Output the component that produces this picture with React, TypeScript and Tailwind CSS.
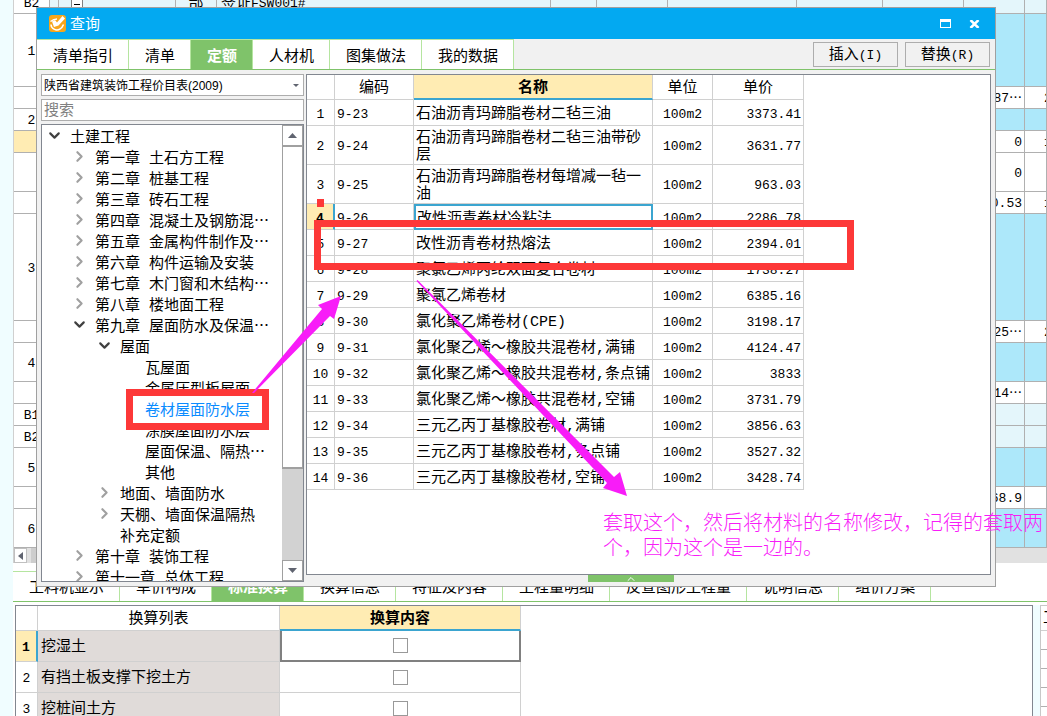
import { ChevronDown, ChevronRight, ChevronUp } from "lucide-react";

type GridRow = { no: string; height: string; fill: string; mark?: boolean; qty?: string; next?: string };

const gridRows: GridRow[] = [
  { no: "1", height: "h-[73px]", fill: "bg-[#ade8fa]" },
  { no: "", height: "h-[22px]", fill: "bg-white", qty: "87⋯", next: "2" },
  { no: "2", height: "h-[22px]", fill: "bg-[#ade8fa]" },
  { no: "", height: "h-[22px]", fill: "bg-white", mark: true, qty: "0", next: "1" },
  { no: "", height: "h-[39px]", fill: "bg-white", qty: "0" },
  { no: "", height: "h-[22px]", fill: "bg-white", qty: "0.53", next: "1" },
  { no: "3", height: "h-[107px]", fill: "bg-[#ade8fa]" },
  { no: "", height: "h-[22px]", fill: "bg-white", qty: "25⋯", next: "2" },
  { no: "4", height: "h-[39px]", fill: "bg-[#ade8fa]" },
  { no: "", height: "h-[22px]", fill: "bg-white", qty: "14⋯" },
  { no: "B1", height: "h-[22px]", fill: "bg-[#e4f6fb]" },
  { no: "B2", height: "h-[22px]", fill: "bg-[#e4f6fb]" },
  { no: "5", height: "h-[39px]", fill: "bg-[#ade8fa]" },
  { no: "", height: "h-[22px]", fill: "bg-white", qty: "68.9" },
  { no: "6", height: "h-[39px]", fill: "bg-[#ade8fa]" },
];

const bottomTabs = ["工料机显示", "单价构成", "标准换算", "换算信息", "特征及内容", "工程量明细", "反查图形工程量", "说明信息", "组价方案"];
const queryTabs = ["清单指引", "清单", "定额", "人材机", "图集做法", "我的数据"];
const conversions = ["挖湿土", "有挡土板支撑下挖土方", "挖桩间土方"];

type Node = { text: string; level: number; state?: "open" | "closed"; selected?: boolean };

const tree: Node[] = [
  { text: "土建工程", level: 0, state: "open" },
  { text: "第一章 土石方工程", level: 1, state: "closed" },
  { text: "第二章 桩基工程", level: 1, state: "closed" },
  { text: "第三章 砖石工程", level: 1, state: "closed" },
  { text: "第四章 混凝土及钢筋混⋯", level: 1, state: "closed" },
  { text: "第五章 金属构件制作及⋯", level: 1, state: "closed" },
  { text: "第六章 构件运输及安装", level: 1, state: "closed" },
  { text: "第七章 木门窗和木结构⋯", level: 1, state: "closed" },
  { text: "第八章 楼地面工程", level: 1, state: "closed" },
  { text: "第九章 屋面防水及保温⋯", level: 1, state: "open" },
  { text: "屋面", level: 2, state: "open" },
  { text: "瓦屋面", level: 3 },
  { text: "金属压型板屋面", level: 3 },
  { text: "卷材屋面防水层", level: 3, selected: true },
  { text: "涂膜屋面防水层", level: 3 },
  { text: "屋面保温、隔热⋯", level: 3 },
  { text: "其他", level: 3 },
  { text: "地面、墙面防水", level: 2, state: "closed" },
  { text: "天棚、墙面保温隔热", level: 2, state: "closed" },
  { text: "补充定额", level: 2 },
  { text: "第十章 装饰工程", level: 1, state: "closed" },
  { text: "第十一章 总体工程", level: 1, state: "closed" },
];

const indents = ["pl-[6px]", "pl-[31px]", "pl-[56px]", "pl-[81px]"];

const items = [
  ["9-23", "石油沥青玛蹄脂卷材二毡三油", "3373.41"],
  ["9-24", "石油沥青玛蹄脂卷材二毡三油带砂层", "3631.77"],
  ["9-25", "石油沥青玛蹄脂卷材每增减一毡一油", "963.03"],
  ["9-26", "改性沥青卷材冷粘法", "2286.78"],
  ["9-27", "改性沥青卷材热熔法", "2394.01"],
  ["9-28", "聚氯乙烯丙纶双面复合卷材", "1738.27"],
  ["9-29", "聚氯乙烯卷材", "6385.16"],
  ["9-30", "氯化聚乙烯卷材(CPE)", "3198.17"],
  ["9-31", "氯化聚乙烯～橡胶共混卷材,满铺", "4124.47"],
  ["9-32", "氯化聚乙烯～橡胶共混卷材,条点铺", "3833"],
  ["9-33", "氯化聚乙烯～橡胶共混卷材,空铺", "3731.79"],
  ["9-34", "三元乙丙丁基橡胶卷材,满铺", "3856.63"],
  ["9-35", "三元乙丙丁基橡胶卷材,条点铺", "3527.32"],
  ["9-36", "三元乙丙丁基橡胶卷材,空铺", "3428.74"],
];

function BillGrid() {
  const line = "border-r border-b border-[#b0b0b0] px-0 pb-0 pt-[3px]";
  return (
    <div className="overflow-hidden border-l border-[#d0d0d0]">
      <table className="-mt-2 w-full table-fixed border-separate border-spacing-0">
        <colgroup>
          <col className="w-[36px]" />
          <col className="w-[9px]" />
          <col className="w-[117px]" />
          <col className="w-[41px]" />
          <col className="w-[334px]" />
          <col className="w-[46px]" />
          <col className="w-[71px]" />
          <col className="w-[129px]" />
          <col className="w-[86px]" />
          <col className="w-[81px]" />
          <col className="w-[61px]" />
          <col />
        </colgroup>
        <tbody>
          <tr className="bg-[#e4f6fb]">
            <td className={`${line} h-[22px] bg-white text-center text-[13px]`}>B2</td>
            <td className={line}></td>
            <td className={line}>
              <div className="ml-3 flex size-[12px] items-center justify-center border border-[#808080] bg-white">
                <span className="h-px w-[6px] bg-black"></span>
              </div>
            </td>
            <td className={`${line} text-center`}>部</td>
            <td className={`${line} pl-1`}>签证<span className="text-[13px]">FSW001#</span></td>
            <td className={line}></td>
            <td className={line}></td>
            <td className={line}></td>
            <td className={line}></td>
            <td className={line}></td>
            <td className={line}></td>
            <td className={line}></td>
          </tr>
          {gridRows.map((row, i) => (
            <tr key={i} className={row.fill}>
              <td className={`${line} ${row.height} ${row.mark ? "bg-[#ffecb3]" : "bg-white"} text-center text-[13px]`}>{row.no}</td>
              <td colSpan={9} className={line}></td>
              <td className={`${line} pr-[2px] text-right text-[13px]`}>{row.qty}</td>
              <td className={`${line} overflow-hidden pl-[19px] text-[13px] whitespace-nowrap`}>{row.next}</td>
            </tr>
          ))}
        </tbody>
      </table>
      <div className="flex h-[15px] bg-[#e1e1e1]">
        <button aria-label="向左" className="flex w-[13px] items-center justify-center border border-[#c0c0c0] bg-white">
          <svg viewBox="0 0 5 8" className="h-2 w-[5px] fill-[#606470]"><path d="M5 0v8L0 4z" /></svg>
        </button>
        <div className="ml-1 w-[700px] bg-[#cdcdcd]"></div>
      </div>
    </div>
  );
}

function ConversionPanel() {
  return (
    <div className="flex min-h-0 flex-1 pt-[3px]">
      <div className="ml-[2px] min-w-0 flex-1 overflow-hidden border border-b-0 border-[#828790]">
        <table className="w-[505px] table-fixed border-separate border-spacing-0">
          <colgroup>
            <col className="w-[22px]" />
            <col className="w-[242px]" />
            <col className="w-[241px]" />
          </colgroup>
          <thead>
            <tr>
              <th className="h-[25px] border-r border-b border-[#d0d0d0] p-0"></th>
              <th className="border-r border-b border-[#d0d0d0] px-0 pt-1 pb-0 font-normal">换算列表</th>
              <th className="border-r border-b-2 border-r-[#d0d0d0] border-b-[#3ba5d0] bg-[#ffecb3] px-0 pt-1 pb-0 font-bold">换算内容</th>
            </tr>
          </thead>
          <tbody>
            {conversions.map((name, i) => (
              <tr key={name}>
                <td className={`h-[31px] border-b border-b-[#d0d0d0] px-0 pt-1 pb-0 text-center text-[13px] ${i === 0 ? "border-r-2 border-r-[#3ba5d0] bg-[#ffecb3] font-bold" : "border-r border-r-[#d0d0d0]"}`}>{i + 1}</td>
                <td className="border-r border-b border-[#d0d0d0] bg-[#e0dbd9] pt-1 pr-0 pb-0 pl-[3px]">{name}</td>
                <td className={`p-0 ${i === 0 ? "border-2 border-t-0 border-[#808080]" : "border-r border-b border-[#d0d0d0]"}`}>
                  <input type="checkbox" aria-label={name} className="mx-auto block size-[15px] appearance-none border border-[#999999] bg-white" />
                </td>
              </tr>
            ))}
          </tbody>
        </table>
      </div>
      <div className="w-[7px] bg-[#f0fdff]"></div>
      <div className="w-[7px] overflow-hidden border-t border-l border-[#c8c8c8]">
        <div className="h-[25px] border-b border-[#d0d0d0] pt-1 pl-[2px]">工</div>
        <div className="h-[19px] border-b border-[#b0b0b0]"></div>
        <div className="h-[19px] border-b border-[#b0b0b0]"></div>
        <div className="h-[19px] border-b border-[#b0b0b0]"></div>
        <div className="h-[19px] border-b border-[#b0b0b0]"></div>
      </div>
    </div>
  );
}

function QuotaTree() {
  return (
    <div className="flex h-[458px] border border-[#828790] bg-white">
      <ul className="min-w-0 flex-1 overflow-hidden pt-[2px]">
        {tree.map((node) => (
          <li key={node.text} className={`flex h-[21px] items-center whitespace-nowrap ${indents[node.level]} ${node.selected ? "text-[#0a8cff]" : ""}`}>
            <span className="mr-[10px] flex w-3 shrink-0 justify-center pb-1">
              {node.state === "open" && <ChevronDown size={17} strokeWidth={3} className="shrink-0 text-[#404040]" />}
              {node.state === "closed" && <ChevronRight size={17} strokeWidth={3} className="shrink-0 text-[#a0a0a0]" />}
            </span>
            <span className="pt-[3px]">{node.text}</span>
          </li>
        ))}
      </ul>
      <div className="flex w-[21px] flex-col bg-[#d2d2d2]">
        <button aria-label="向上" className="flex h-[22px] items-center justify-center border border-b-2 border-[#a0a0a0] bg-white">
          <svg viewBox="0 0 9 5" className="h-[5px] w-[9px] fill-[#606470]"><path d="M0 5h9L4.500 0z" /></svg>
        </button>
        <div className="h-[322px] border border-t-0 border-b-2 border-[#a0a0a0] bg-white"></div>
        <button aria-label="向下" className="mt-auto flex h-[21px] items-center justify-center border border-[#a0a0a0] bg-white">
          <svg viewBox="0 0 9 5" className="h-[5px] w-[9px] fill-[#606470]"><path d="M0 0h9L4.500 5z" /></svg>
        </button>
      </div>
    </div>
  );
}

function QuotaTable() {
  const line = "border-r border-b border-[#d0d0d0] px-0 pb-0 pt-1";
  return (
    <table className="w-[497px] table-fixed border-separate border-spacing-0">
      <colgroup>
        <col className="w-[28px]" />
        <col className="w-[79px]" />
        <col className="w-[239px]" />
        <col className="w-[60px]" />
        <col className="w-[91px]" />
      </colgroup>
      <thead>
        <tr>
          <th className={`${line} h-[25px]`}></th>
          <th className={`${line} font-normal`}>编码</th>
          <th className="border-r border-b-2 border-r-[#d0d0d0] border-b-[#3ba5d0] bg-[#ffecb3] px-0 pt-1 pb-0 font-bold">名称</th>
          <th className={`${line} font-normal`}>单位</th>
          <th className={`${line} font-normal`}>单价</th>
        </tr>
      </thead>
      <tbody>
        {items.map(([code, name, price], i) => {
          const current = i === 3;
          return (
            <tr key={code}>
              <td className={`border-b border-b-[#d0d0d0] px-0 pt-1 pb-0 text-center text-[13px] ${i === 1 || i === 2 ? "h-[39px]" : "h-[26px]"} ${current ? "border-r-2 border-r-[#3ba5d0] bg-[#ffecb3] font-bold" : "border-r border-r-[#d0d0d0]"}`}>{i + 1}</td>
              <td className={`${line} pl-[2px] text-[13px]`}>{code}</td>
              <td className={`pt-1 pr-0 pb-0 leading-[17px] ${current ? "border-2 border-[#3ba5d0] pl-[1px]" : "border-r border-b border-[#d0d0d0] pl-[2px]"}`}>{name}</td>
              <td className={`${line} text-center text-[13px]`}>100m2</td>
              <td className={`${line} pr-[2px] text-right text-[13px]`}>{price}</td>
            </tr>
          );
        })}
      </tbody>
    </table>
  );
}

function QueryDialog() {
  return (
    <section className="absolute top-[7px] right-[51px] left-[36px] border border-[#a0a0a0] bg-[#f1f1f1]">
      <header className="flex h-[31px] items-center bg-[#03a9f1] pr-[15px] pl-[12px] text-white">
        <svg viewBox="0 0 17 17" className="size-[17px]">
          <rect width="17" height="17" rx="3" fill="#f7a61b" />
          <path d="M1.500 6.500c2-1.500 4-2.500 6.500-2.500M2 9.500c0 4 5 7 9 4.500 1.800-1.200 2.800-2.500 3.500-4.500" fill="none" stroke="#fff" strokeWidth="1.500" />
          <path d="M3 6.500l3-1.500 2 2.500L13.500 1l2.500 2.500L9.500 10.500 5 12z" fill="#fff" />
        </svg>
        <h1 className="ml-1 flex-1 pt-1">查询</h1>
        <button aria-label="最大化" className="h-[9px] w-[11px] border border-t-[3px] border-white"></button>
        <button aria-label="关闭" className="ml-[18px]">
          <svg viewBox="0 0 11 8" className="h-2 w-[11px]"><path d="M1.500 0L9.500 8M9.500 0L1.500 8" stroke="#fff" strokeWidth="2.500" /></svg>
        </button>
      </header>
      <nav className="flex h-[31px] border-b border-[#7fc36a]">
        {queryTabs.map((tab) => (
          <button key={tab} className={`border-t border-r border-[#b5e5a0] pt-[6px] pr-[15px] pl-4 ${tab === "定额" ? "bg-[#7fc36a] font-bold text-white" : "bg-white"}`}>{tab}</button>
        ))}
        <div className="ml-auto flex gap-[7px] pt-[3px] pr-[5px]">
          <button className="h-[25px] w-[85px] border border-[#adadad] pt-[3px]">插入<span className="text-[13px]">(I)</span></button>
          <button className="h-[25px] w-[85px] border border-[#adadad] pt-[3px]">替换<span className="text-[13px]">(R)</span></button>
        </div>
      </nav>
      <div className="flex gap-[2px] p-1">
        <div className="flex w-[263px] shrink-0 flex-col gap-[3px]">
          <div className="relative">
            <select aria-label="定额库" className="block h-[22px] w-full appearance-none border border-[#adadad] bg-white pt-px pl-[2px] font-['Liberation_Sans','Noto_Sans_CJK_SC',sans-serif] text-[12px]">
              <option>陕西省建筑装饰工程价目表(2009)</option>
            </select>
            <svg viewBox="0 0 6 3" className="pointer-events-none absolute top-[10px] right-[5px] h-[3px] w-[6px] fill-[#606470]"><path d="M0 0h6L3 3z" /></svg>
          </div>
          <input aria-label="搜索" placeholder="搜索" className="h-[22px] border border-[#adadad] bg-white pt-[3px] pl-[2px] placeholder:text-[#808080]" />
          <QuotaTree />
        </div>
        <div className="flex min-w-0 flex-1 flex-col">
          <div className="flex-1 border border-[#828790] bg-white">
            <QuotaTable />
          </div>
          <button aria-label="收起" className="ml-[282px] flex h-[7px] w-[86px] items-center justify-center overflow-hidden bg-[#7fc36a] text-white">
            <ChevronUp size={12} className="shrink-0" />
          </button>
        </div>
      </div>
    </section>
  );
}

function Annotations() {
  return (
    <>
      <svg className="pointer-events-none absolute top-0 left-0 h-full w-full">
        <g fill="none" stroke="#fd3838" strokeWidth="7">
          <path d="M317.500 223.500h533v43h-533z" />
          <path d="M129.500 392.500h136v34h-136z" />
        </g>
        <path d="M317 199h7v8h-7z" fill="#fd3838" />
        <g fill="#f81cf8">
          <path d="M252 393L322 309L318 305L341 296L334 319L330 316L254 393z" />
          <path d="M416.500 281L417.500 280L614 477L620 472L627 496L603 488L607 483z" />
        </g>
      </svg>
      <p className="absolute top-[509px] left-[603px] w-[440px] font-['Noto_Sans_CJK_SC',sans-serif] text-[20px] leading-[25px] font-light text-[#f81cf8]">
        套取这个，然后将材料的名称修改，记得的套取两个，因为这个是一边的。
      </p>
    </>
  );
}

export default function App() {
  return (
    <main className="relative flex h-screen overflow-hidden bg-white font-['Liberation_Mono','Noto_Sans_CJK_SC',monospace] text-[15px] leading-[18px] text-black">
      <div className="w-[13px] shrink-0 bg-[#f0fdff]"></div>
      <div className="flex min-w-0 flex-1 flex-col">
        <BillGrid />
        <nav className="mt-2 flex h-[31px] shrink-0 border-b border-[#7fc36a]">
          {bottomTabs.map((tab) => (
            <button key={tab} className={`border-t border-r border-[#b5e5a0] pt-[5px] pr-[15px] pl-4 whitespace-nowrap ${tab === "标准换算" ? "bg-[#7fc36a] font-bold text-white" : "bg-white"}`}>{tab}</button>
          ))}
        </nav>
        <ConversionPanel />
      </div>
      <QueryDialog />
      <Annotations />
    </main>
  );
}
